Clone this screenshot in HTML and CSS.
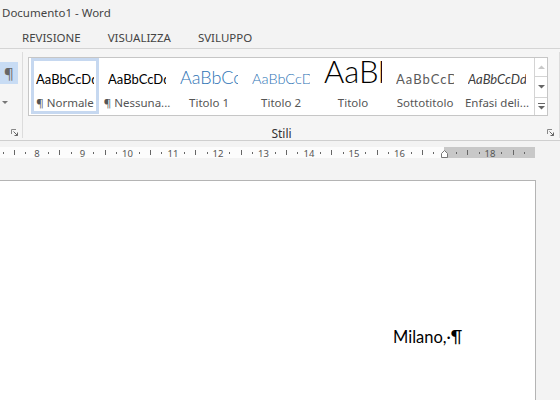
FILE: index.html
```html
<!DOCTYPE html>
<html lang="it">
<head>
<meta charset="utf-8">
<title>Documento1 - Word</title>
<link rel="stylesheet" href="styles.css">
</head>
<body>
<div class="titlebar">Documento1 - Word</div>
<div class="tabs">
  <span class="tab">REVISIONE</span>
  <span class="tab">VISUALIZZA</span>
  <span class="tab">SVILUPPO</span>
</div>
<div class="ribbon">
  <div class="group-para">
    <div class="pbtn">¶</div>
    <svg class="ddarrow" width="6" height="4" viewBox="0 0 6 4"><path d="M0 0H6L3 3Z" fill="#777"/></svg>
    <svg class="launcher" width="8" height="8" viewBox="0 0 8 8"><path d="M0.5 5V0.5H5" fill="none" stroke="#888"/><path d="M2.5 2.5L6.5 6.5M3.5 6.5H6.5V3.5" fill="none" stroke="#666"/></svg>
  </div>
  <div class="sep"></div>
  <div class="group-styles">
    <div class="gallery">
      <div class="gitems">
        <div class="gitem">
          <div class="gbox selected">
            <div class="pv pv-normal"><span>AaBbCcDdEe</span></div>
            <div class="glabel">¶ Normale</div>
          </div>
        </div>
        <div class="gitem">
          <div class="gbox">
            <div class="pv pv-normal"><span>AaBbCcDdEe</span></div>
            <div class="glabel">¶ Nessuna...</div>
          </div>
        </div>
        <div class="gitem">
          <div class="gbox">
            <div class="pv pv-t1"><span>AaBbCcDd</span></div>
            <div class="glabel">Titolo 1</div>
          </div>
        </div>
        <div class="gitem">
          <div class="gbox">
            <div class="pv pv-t2"><span>AaBbCcDd</span></div>
            <div class="glabel">Titolo 2</div>
          </div>
        </div>
        <div class="gitem">
          <div class="gbox">
            <div class="pv pv-title"><span>AaBbC</span></div>
            <div class="glabel">Titolo</div>
          </div>
        </div>
        <div class="gitem">
          <div class="gbox">
            <div class="pv pv-sub"><span>AaBbCcDd</span></div>
            <div class="glabel">Sottotitolo</div>
          </div>
        </div>
        <div class="gitem">
          <div class="gbox">
            <div class="pv pv-emph"><span>AaBbCcDdEe</span></div>
            <div class="glabel">Enfasi deli...</div>
          </div>
        </div>
      </div>
      <div class="gscroll">
        <div class="gbtn gb-up"><svg width="7" height="4" viewBox="0 0 7 4"><path d="M0 4H7L3.5 0.5Z" fill="#c8c8c8"/></svg></div>
        <div class="gbtn gb-down"><svg width="7" height="4" viewBox="0 0 7 4"><path d="M0 0H7L3.5 3.5Z" fill="#666"/></svg></div>
        <div class="gbtn gb-more"><svg width="7" height="7" viewBox="0 0 7 7"><path d="M0 0.5H7" stroke="#666"/><path d="M0 3H7L3.5 6.5Z" fill="#666"/></svg></div>
      </div>
    </div>
    <div class="gfooter">
      <span class="glabel-group">Stili</span>
      <svg class="launcher" width="8" height="8" viewBox="0 0 8 8"><path d="M0.5 5V0.5H5" fill="none" stroke="#888"/><path d="M2.5 2.5L6.5 6.5M3.5 6.5H6.5V3.5" fill="none" stroke="#666"/></svg>
    </div>
  </div>
  <div class="sep"></div>
</div>
<div class="ruler-row">
  <svg class="ruler" width="535" height="11" viewBox="0 0 535 11">
    <rect x="0" y="0" width="444" height="11" fill="#fcfcfc"/>
    <rect x="444" y="0" width="91" height="11" fill="#c8c8c8"/>
    <g fill="#666">
      <rect x="3" y="5" width="1" height="2"/><rect x="14" y="3" width="1" height="5"/><rect x="25" y="5" width="1" height="2"/>
      <rect x="48" y="5" width="1" height="2"/><rect x="59" y="3" width="1" height="5"/><rect x="71" y="5" width="1" height="2"/>
      <rect x="93" y="5" width="1" height="2"/><rect x="105" y="3" width="1" height="5"/><rect x="116" y="5" width="1" height="2"/>
      <rect x="139" y="5" width="1" height="2"/><rect x="150" y="3" width="1" height="5"/><rect x="161" y="5" width="1" height="2"/>
      <rect x="184" y="5" width="1" height="2"/><rect x="195" y="3" width="1" height="5"/><rect x="207" y="5" width="1" height="2"/>
      <rect x="229" y="5" width="1" height="2"/><rect x="241" y="3" width="1" height="5"/><rect x="252" y="5" width="1" height="2"/>
      <rect x="275" y="5" width="1" height="2"/><rect x="286" y="3" width="1" height="5"/><rect x="297" y="5" width="1" height="2"/>
      <rect x="320" y="5" width="1" height="2"/><rect x="331" y="3" width="1" height="5"/><rect x="343" y="5" width="1" height="2"/>
      <rect x="365" y="5" width="1" height="2"/><rect x="377" y="3" width="1" height="5"/><rect x="388" y="5" width="1" height="2"/>
      <rect x="411" y="5" width="1" height="2"/><rect x="422" y="3" width="1" height="5"/><rect x="433" y="5" width="1" height="2"/>
      <rect x="456" y="5" width="1" height="2"/><rect x="467" y="3" width="1" height="5"/><rect x="479" y="5" width="1" height="2"/>
      <rect x="501" y="5" width="1" height="2"/><rect x="513" y="3" width="1" height="5"/><rect x="524" y="5" width="1" height="2"/>
    </g>
    <g class="rnum" fill="#555" text-anchor="middle">
      <text x="37" y="9.5">8</text>
      <text x="82.5" y="9.5">9</text>
      <text x="127.5" y="9.5">10</text>
      <text x="173" y="9.5">11</text>
      <text x="218" y="9.5">12</text>
      <text x="263.5" y="9.5">13</text>
      <text x="309" y="9.5">14</text>
      <text x="354" y="9.5">15</text>
      <text x="399.5" y="9.5">16</text>
      <text x="490" y="9.5">18</text>
    </g>
    <path d="M441.5 10.5V6.5L444.5 3.5L447.5 6.5V10.5Z" fill="#fff" stroke="#777"/>
  </svg>
</div>
<div class="workspace">
  <div class="page">
    <p class="line">Milano,·¶</p>
  </div>
</div>
</body>
</html>
```
FILE: styles.css
```css
* { box-sizing: border-box; }
body {
  margin: 0;
  width: 560px;
  height: 400px;
  overflow: hidden;
  background: #f3f3f3;
  font-family: "Noto Sans", "Open Sans", sans-serif;
  color: #444;
}
.titlebar {
  height: 26px;
  padding-left: 2px;
  font-size: 11.5px;
  line-height: 26px;
  color: #444;
}
.tabs {
  height: 23px;
  display: flex;
  align-items: center;
  padding-left: 8px;
  border-bottom: 1px solid #d4d4d4;
  font-size: 11.5px;
}
.tab { padding: 0 14px; color: #444; }
.tab + .tab { margin-left: -1px; }
.ribbon {
  height: 92px;
  display: flex;
  border-bottom: 1px solid #cfcfcf;
  background: #f5f5f5;
}
.group-para {
  width: 22px;
  display: flex;
  flex-direction: column;
  padding-top: 13px;
}
.pbtn {
  width: 18px;
  height: 22px;
  background: #c8dcf4;
  color: #666;
  font-size: 15px;
  line-height: 22px;
  text-align: center;
}
.ddarrow { display: block; margin: 17px 0 0 2px; }
.group-para .launcher { display: block; margin: auto 0 3px 11px; }
.sep { width: 1px; background: #dcdcdc; margin: 3px 0 2px; }
.group-styles {
  flex: 1;
  display: flex;
  flex-direction: column;
  padding: 8px 4px 0 5px;
}
.gallery {
  width: 520px;
  height: 59px;
  display: flex;
  border: 1px solid #c6c6c6;
  background: #fff;
}
.gitems { width: 505px; display: flex; }
.gitem { width: 72px; padding: 0 2px 1px; }
.gbox {
  height: 56px;
  border: 3px solid transparent;
}
.gbox.selected { border-color: #c6d8f0; }
.pv {
  height: 34px;
  margin: 0 2px;
  overflow: hidden;
  display: flex;
  align-items: flex-end;
  padding-bottom: 9px;
  white-space: nowrap;
  font-family: Lato, "Liberation Sans", sans-serif;
}
.pv span { line-height: 1; }
.pv-normal { font-size: 13px; color: #000; }
.pv-t1 { font-size: 18px; color: #2e74b5; font-weight: 300; }
.pv-t2 { font-size: 14.5px; color: #2e74b5; font-weight: 300; }
.pv-title { font-size: 31px; color: #000; font-weight: 300; padding-bottom: 8px; }
.pv-sub { font-size: 13px; color: #5a5a5a; letter-spacing: 1px; }
.pv-emph { font-size: 13px; color: #404040; font-style: italic; }
.glabel {
  height: 15px;
  line-height: 15px;
  margin: 0 -3px;
  font-size: 11.5px;
  text-align: center;
  white-space: nowrap;
  color: #555;
}
.gscroll {
  width: 13px;
  border-left: 1px solid #d4d4d4;
  display: flex;
  flex-direction: column;
}
.gbtn { display: flex; align-items: center; justify-content: center; }
.gb-up { height: 19px; border-bottom: 1px solid #d4d4d4; }
.gb-down { height: 21px; border-bottom: 1px solid #d4d4d4; }
.gb-more { flex: 1; }
.gfooter {
  flex: 1;
  display: flex;
  align-items: center;
  padding-top: 9px;
}
.glabel-group {
  flex: 1;
  text-align: center;
  font-size: 12px;
  padding-right: 12px;
  color: #333;
}
.gfooter .launcher { display: block; margin-top: -1px; }
.ruler-row { height: 39px; padding-top: 6px; }
.ruler { display: block; }
.rnum { font-family: "Noto Sans", sans-serif; font-size: 9.5px; }
.workspace { height: 220px; }
.page {
  width: 536px;
  height: 220px;
  background: #fff;
  border-top: 1px solid #b4b4b4;
  border-right: 1px solid #b4b4b4;
  padding: 147px 0 0 393px;
}
.line {
  margin: 0;
  font-family: Lato, "Liberation Sans", sans-serif;
  font-size: 16.5px;
  line-height: 19px;
  color: #000;
  white-space: nowrap;
}
```
